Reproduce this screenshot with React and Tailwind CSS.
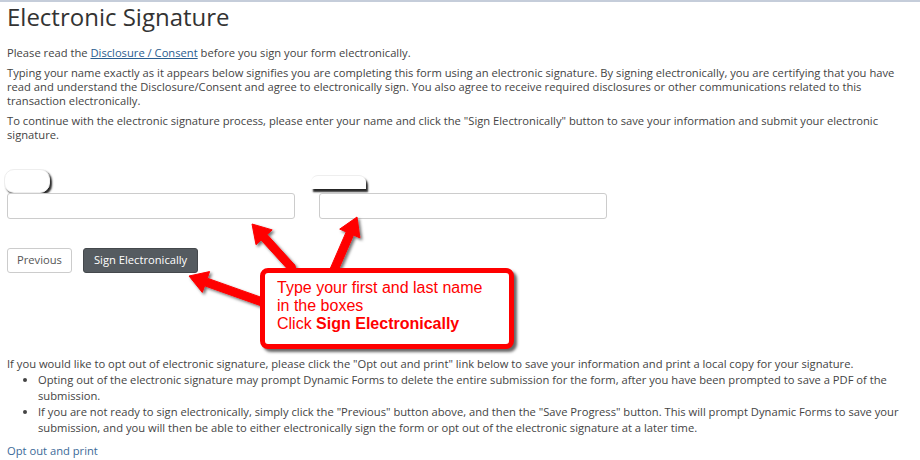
import React from "react";

function arrowPoints(tx, ty, hx, hy, shaft = 8, head = 22, headLen = 18) {
  const dx = hx - tx, dy = hy - ty;
  const len = Math.hypot(dx, dy);
  const ux = dx / len, uy = dy / len;
  const px = -uy, py = ux;
  const bx = hx - ux * headLen, by = hy - uy * headLen;
  const s = shaft / 2, h = head / 2;
  const pts = [
    [tx + px * s, ty + py * s],
    [bx + px * s, by + py * s],
    [bx + px * h, by + py * h],
    [hx, hy],
    [bx - px * h, by - py * h],
    [bx - px * s, by - py * s],
    [tx - px * s, ty - py * s],
  ];
  return pts.map((p) => p.map((v) => v.toFixed(1)).join(",")).join(" ");
}

function Arrows() {
  const arrows = [
    [292, 266, 252, 222],
    [334, 268, 357, 215],
    [268, 302, 189, 274],
  ];
  return (
    <svg className="absolute left-0 top-0 pointer-events-none" width="920" height="460">
      <defs>
        <filter id="sh" x="-20%" y="-20%" width="140%" height="140%">
          <feDropShadow dx="2" dy="2" stdDeviation="1.5" floodColor="#000" floodOpacity="0.55" />
        </filter>
      </defs>
      {arrows.map((a, i) => (
        <g key={i} filter="url(#sh)">
          <polygon points={arrowPoints(...a)} fill="#ff0000" stroke="#ff0000" strokeWidth="1" strokeLinejoin="round" />
          <circle cx={a[0]} cy={a[1]} r="4" fill="#ff0000" />
        </g>
      ))}
    </svg>
  );
}

export default function App() {
  return (
    <div className="relative w-[920px] h-[460px] overflow-hidden bg-white text-[#444] border-t-2 border-[#c5cdda]" style={{ fontFamily: "'Open Sans', sans-serif" }}>
      <div className="pl-[7px] pr-[10px]">
        <h1 className="text-[24px] leading-[28px] text-[#333] mt-[1px] font-normal">Electronic Signature</h1>
        <div className="text-[11.2px] leading-[14px]">
          <p className="mt-[15px]">
            Please read the <span className="text-[#2a5d8f] underline">Disclosure / Consent</span> before you sign your form electronically.
          </p>
          <p className="mt-[6px]">
            Typing your name exactly as it appears below signifies you are completing this form using an electronic signature. By signing electronically, you are certifying that you have read and understand the Disclosure/Consent and agree to electronically sign. You also agree to receive required disclosures or other communications related to this transaction electronically.
          </p>
          <p className="mt-[6px]">
            To continue with the electronic signature process, please enter your name and click the "Sign Electronically" button to save your information and submit your electronic signature.
          </p>
        </div>

        <div className="flex gap-[24px] mt-[27px]">
          <div className="flex flex-col w-[288px]">
            <div className="h-[24px] w-[46px] -ml-[3px] bg-white border border-[#eee] rounded-[10px] shadow-[2px_2px_2px_rgba(0,0,0,0.85)]" />
            <div className="h-[26px] border border-[#ccc] rounded-[3px] bg-white" />
          </div>
          <div className="flex flex-col w-[288px]">
            <div className="h-[24px] flex items-end">
              <div className="h-[14px] w-[55px] -ml-[8px] mb-[4px] bg-white border-t border-[#eee] rounded-t-[7px] shadow-[2px_3px_2px_rgba(0,0,0,0.85)]" />
            </div>
            <div className="h-[26px] border border-[#ccc] rounded-[3px] bg-white" />
          </div>
        </div>

        <div className="flex gap-[11px] mt-[29px] text-[11.2px]">
          <button className="h-[25px] px-[9px] border border-[#ccc] rounded-[3px] bg-white text-[#555]">Previous</button>
          <button className="h-[25px] px-[10px] border border-[#44484c] rounded-[3px] bg-[#555b60] text-white">Sign Electronically</button>
        </div>

        <div className="text-[11.2px] leading-[16px] mt-[83px]">
          <p>If you would like to opt out of electronic signature, please click the "Opt out and print" link below to save your information and print a local copy for your signature.</p>
          <ul className="list-disc pl-[31px]">
            <li>Opting out of the electronic signature may prompt Dynamic Forms to delete the entire submission for the form, after you have been prompted to save a PDF of the submission.</li>
            <li>If you are not ready to sign electronically, simply click the "Previous" button above, and then the "Save Progress" button. This will prompt Dynamic Forms to save your submission, and you will then be able to either electronically sign the form or opt out of the electronic signature at a later time.</li>
          </ul>
          <p className="mt-[7px] text-[#3c6a98]">Opt out and print</p>
        </div>
      </div>

      <Arrows />

      <div className="absolute left-[260px] top-[266px] w-[254px] h-[81px] border-[5px] border-[#ff0000] rounded-[8px] bg-white shadow-[3px_3px_3px_rgba(0,0,0,0.6)] pl-[12px] pt-[6px] text-[#ff0000] text-[16px] leading-[18px]" style={{ fontFamily: "'Liberation Sans', Arial, sans-serif" }}>
        <div>Type your first and last name</div>
        <div>in the boxes</div>
        <div>Click <b>Sign Electronically</b></div>
      </div>
    </div>
  );
}
